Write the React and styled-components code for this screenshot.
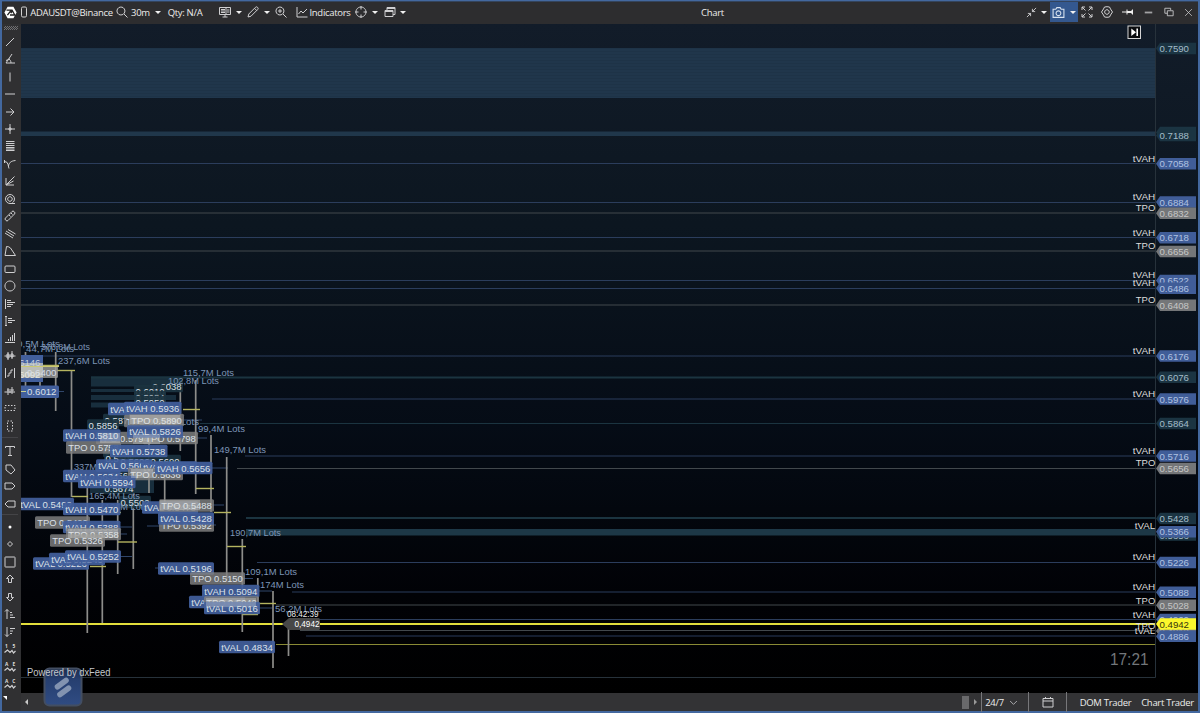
import styled, { createGlobalStyle } from "styled-components"

const GlobalStyle = createGlobalStyle`
  * {
    box-sizing: border-box;
  }

  body {
    margin: 0;
    background: #000;
    overflow: hidden;
  }
`

const Window = styled.div`
  width: 1200px;
  height: 713px;
  display: flex;
  flex-direction: column;
  border: 2px solid #43689f;
  border-top-width: 1px;
  background: #2d2d2f;
  color: #ececec;
  font-family: "Open Sans", "Noto Sans", sans-serif;
  font-size: 9.5px;
  letter-spacing: -0.3px;
`

const Header = styled.header`
  display: flex;
  height: 23px;
  flex: none;
  border-top: 1px solid #34445c;
`

const HeaderGroup = styled.div`
  display: flex;
  width: ${({ $width }) => $width}px;
`

const Slot = styled.div`
  display: flex;
  align-items: center;
  justify-content: ${({ $align }) => $align || "center"};
  width: ${({ $width }) => $width}px;
  height: 20px;
  flex: none;
  white-space: nowrap;
`

const CameraButton = styled.div`
  display: flex;
  align-items: center;
  justify-content: space-between;
  width: 28px;
  height: 20px;
  padding: 0 2px;
  flex: none;
  background: #34588f;
`

const Title = styled.div`
  display: flex;
  align-items: center;
  flex: 1;
  height: 21px;
`

const Caret = styled.i`
  border: 3px solid transparent;
  border-top: 3.5px solid #f0f0f0;
  border-bottom: 0;
`

const Body = styled.div`
  display: flex;
  flex: 1;
  min-height: 0;
`

const Toolbar = styled.nav`
  width: 19px;
  flex: none;
  display: flex;
  flex-direction: column;
  padding-top: 2px;
  padding-right: 4px;
  background: #303032;
`

const Grip = styled.div`
  height: 4px;
  margin: 0 -1px 3px 2px;
  flex: none;
  background: repeating-conic-gradient(#8a8a8d 0 25%, #303032 0 50%) 0 0 / 2px 2px;
  opacity: 0.7;
`

const Tool = styled.div`
  display: flex;
  align-items: center;
  justify-content: center;
  height: 17.46px;
  flex: none;
`

const Divider = styled.hr`
  width: 16px;
  margin: ${({ $margin }) => $margin};
  border: 0;
  border-top: 1px solid #444447;
`

const Corner = styled.i`
  border-left: 4px solid transparent;
  border-top: 4px solid #fff;
  width: 0;
  margin: 3px 0 0 1px;
`

const Main = styled.main`
  display: flex;
  flex-direction: column;
  flex: 1;
`

const ChartSvg = styled.svg`
  display: block;
  font-family: "Liberation Sans", Arial, sans-serif;
  font-size: 9.9px;
  letter-spacing: 0;
`

const Footer = styled.footer`
  display: flex;
  align-items: center;
  height: 18px;
  flex: none;
  background: #333335;
`

const FooterArrow = styled.div`
  width: 10px;
  display: flex;
  justify-content: center;
`

const LeftArrow = styled.i`
  border: 3px solid transparent;
  border-right: 3px solid #c8c8c8;
  border-left: 0;
`

const RightArrow = styled.i`
  border: 3px solid transparent;
  border-left: 3px solid #999;
  border-right: 0;
`

const ScrollSpace = styled.div`
  width: 931px;
`

const ScrollThumb = styled.div`
  width: 7px;
  height: 13px;
  margin-right: 5px;
  background: #69696b;
`

const FooterItem = styled.div`
  display: flex;
  align-items: center;
  justify-content: center;
  gap: 5px;
  height: 20px;
  width: ${({ $width }) => $width}px;
  padding-right: ${({ $inset }) => $inset || 0}px;
  flex: none;
  white-space: nowrap;
  border-left: ${({ $line }) => ($line ? "1px solid #77777a" : 0)};
`

const Badge = styled.svg`
  position: absolute;
  left: 24px;
  top: 664px;
  font-family: "Liberation Sans", Arial, sans-serif;
  font-size: 10px;
`

const Icon = ({ d, size = 12, color = "#cfcfd1", width = 1, children }) => (
  <svg
    width={size}
    height={size}
    viewBox="0 0 12 12"
    fill="none"
    stroke={color}
    strokeWidth={width}
  >
    {d && <path d={d} />}
    {children}
  </svg>
)

// svg text squeezed or stretched to a given width
const Label = ({ x, y, width, fill, children, ...rest }) => (
  <text x={x} y={y} textLength={width} lengthAdjust="spacingAndGlyphs" fill={fill} {...rest}>
    {children}
  </text>
)

const mainTools = [
  "M2 10 10 2",
  "M8 1 2 10H11M4.5 6C6 6.5 7 8 7 10M2 7.5 6 6",
  "M6 1.5V10.5",
  "M1 6H11",
  "M2 6H10M6.5 2.5 10 6 6.5 9.5",
  "M6 1V11M1 6H11M5 5H7V7H5Z",
  "M2 1.5H10.5M2 3.5H10.5M2 5.5H10.5M2 7.5H10.5M2 9H10.5M2 10.5H10.5",
  "M.5 3.5Q3.5 3.5 4 6.5L5 10.5M4.5 8C5 5 6.5 3 11.5 2.5M.5 2V5",
  "M2 10V3M2 10 10.5 1.5M2 10H10M2 10 9.5 6",
  "M11 10.5H6A4.5 4.5 0 1 1 10.5 6A4.5 4.5 0 0 1 8.5 9.7M6 3.7A2.3 2.3 0 1 1 5.9 3.7Z",
  "M1.5 8 8 1.5Q9 .5 10 1.5L10.5 2Q11.5 3 10.5 4L4 10.5Q3 11.5 2 10.5L1.5 10Q.5 9 1.5 8ZM5 5 6.5 6.5M7 3 8.5 4.5",
  "M1 5 9 10M2 3 10 8M4 1.5 11.5 6",
  "M2.5 1.5 1 10.5H11.5L6.5 3Q5 1.5 2.5 1.5Z",
  "M2 3H10Q11 3 11 4V8.5Q11 9.5 10 9.5H2Q1 9.5 1 8.5V4Q1 3 2 3Z",
  "M6 1A5 5 0 1 1 5.9 1Z",
  "M1.5 1V11M3 2.5H7M3 4.5H11M3 6.5H9M3 8.5H7",
  "M2 1V11M4 3.5H8M4 5.5H11M4 7.5H8M1 1.5H3M1 10.5H3",
  "M10.5 1V9M8.5 3V9M6.5 5V9M4.5 7V9M1 10.5H11",
  "M.5 6H11.5M4 2V10M8 1V9M3 4H5V8H3ZM7 4H9V7H7Z",
  "M1.5 1V11M10.5 1V11M3 9H5V6H7V3H9",
  "M.5 7H11M4 3V10M8 2V9M6 4V8M3 5H5M7 5H10",
]

const markTools = [
  "M1.5 3V1.5H10.5V3M6 1.5V10.5M4 10.5H8",
  "M2 2 7 2 11 7 7 11 2 7Z",
  "M1 3H8L11 6 8 9H1Z",
  "M4 3H11V9H4L1 6Z",
]

const shapeTools = [
  null,
  "M6 3.5 8.5 6 6 8.5 3.5 6Z",
  "M1.5 1H10.5Q11 1 11 1.5V10.5Q11 11 10.5 11H1.5Q1 11 1 10.5V1.5Q1 1 1.5 1Z",
  "M6 2 9.5 5.5H7.5V9.5H4.5V5.5H2.5Z",
  "M6 10 2.5 6.5H4.5V2.5H7.5V6.5H9.5Z",
  "M3 11V1.5M1 3.5 3 1.5 5 3.5M6 4.5H8M6 7H9M6 9.5H11",
  "M3 1V10.5M1 8.5 3 10.5 5 8.5M6 2.5H11M6 5H9M6 7.5H8",
]

const waves = ["1 5", "A E", "A C"]

const bars = [
  [25.5, 352, 398],
  [40, 360, 386],
  [55.7, 352, 411],
  [71.5, 370, 497],
  [87.3, 483, 633],
  [102.3, 500, 623],
  [117.7, 500, 574],
  [133.3, 490, 569],
  [149, 440, 493],
  [164.7, 470, 507],
  [180.3, 388, 451],
  [195.7, 380, 494],
  [211, 435, 512],
  [226.7, 457, 580],
  [242.3, 539, 632],
  [257.8, 578, 614],
  [273, 591, 668],
  [288.5, 620, 656],
]

const ticks = [
  [21, 59, 365.5],
  [57, 75, 370.5],
  [72, 88, 496.5],
  [90, 106, 566.5],
  [105, 121, 512.5],
  [118, 137, 542],
  [183, 200, 409.5],
  [196, 214, 488.5],
  [214, 231, 512.5],
  [227, 246, 546.5],
  [242, 258, 614.5],
  [258, 276, 603.5],
]

const lineColors = { blue: "#2b3d5c", gray: "#42484c", teal: "#1b3440" }

// kind, y, start x
const levels = [
  ["blue", 163.5, 21],
  ["blue", 202.5, 21],
  ["gray", 213, 21],
  ["blue", 237.5, 21],
  ["gray", 251, 21],
  ["blue", 280.5, 21],
  ["blue", 288.5, 21],
  ["gray", 305, 21],
  ["blue", 356, 21],
  ["teal", 377.5, 91, 2],
  ["blue", 399, 212],
  ["teal", 423.5, 200],
  ["blue", 456, 245],
  ["gray", 468.5, 237],
  ["teal", 518, 246, 2],
  ["blue", 562.5, 257],
  ["blue", 592, 292],
  ["gray", 605, 276],
  ["blue", 619.5, 290],
  ["gray", 630.5, 300],
  ["blue", 636, 306],
]

const stubs = [
  [21, 64, 391.5],
  [172, 216, 525],
  [155, 162, 568],
  [176, 202, 420],
  [190, 207, 438],
  [210, 228, 468],
  [208, 224, 505],
  [104, 132, 527],
  [106, 127, 534],
  [115, 132, 556.5],
  [240, 253, 578.5],
  [257, 272, 591],
  [257, 272, 608],
  [147, 162, 526],
]

const volumes = [
  ["0,5M Lots", 17, 343, 43],
  ["44,7M Lots", 26, 348, 48],
  ["373,8M Lots", 41, 346, 49],
  ["237,6M Lots", 58, 360, 52],
  ["115,7M Lots", 183, 372, 51],
  ["102,8M Lots", 168, 380, 51],
  ["88,1M Lots", 151, 421, 48],
  ["99,4M Lots", 198, 428, 47],
  ["149,7M Lots", 214, 449, 52],
  ["337M Lots", 74, 466, 43],
  ["165,4M Lots", 89, 495, 51],
  ["126M Lots", 105, 506, 43],
  ["190,7M Lots", 230, 532, 51],
  ["109,1M Lots", 245, 571, 52],
  ["174M Lots", 260, 584, 44],
  ["56,2M Lots", 275, 608, 47],
]

// text, x, y
const volumeLevels = [
  ["0.6038", 151, 386],
  ["0.6010", 134, 391],
  ["0.5984", 134, 397],
  ["0.5950", 134, 402],
  ["0.5879", 103, 420],
  ["0.5856", 87, 425.5],
  ["0.5738", 103, 451],
  ["0.5696", 104, 458],
  ["0.5606", 119, 461],
  ["0.5690", 149, 461],
  ["0.5634", 108, 475],
  ["0.5674", 103, 488],
  ["0.5502", 119, 502],
]

// kind, text, x, y
const tags = [
  ["blue", "tVAH 0.5932", 108, 409],
  ["gray", "TPO 0.5880", 124, 421],
  ["gray", "TPO 0.5890", 129, 420],
  ["blue", "tVAH 0.5936", 124, 408],
  ["gray", "TPO 0.5794", 96, 438],
  ["gray", "TPO 0.5798", 143, 438],
  ["blue", "tVAL 0.5826", 127, 431.5],
  ["blue", "tVAH 0.5810", 63, 435.5],
  ["gray", "TPO 0.5758", 66, 447.5],
  ["blue", "tVAH 0.5738", 110, 451],
  ["blue", "tVAH 0.5634", 63, 476],
  ["blue", "tVAL 0.5668", 96, 465.5],
  ["blue", "tVAL 0.5658", 141, 467.5],
  ["gray", "TPO 0.5636", 128, 474],
  ["blue", "tVAH 0.5656", 155, 468],
  ["blue", "tVAH 0.5594", 78, 482],
  ["blue", "tVAL 0.5492", 18, 504],
  ["gray", "TPO 0.5420", 35, 522.5],
  ["blue", "tVAH 0.5470", 63, 509],
  ["blue", "tVAH 0.5388", 63, 527],
  ["gray", "TPO 0.5358", 66, 534],
  ["gray", "TPO 0.5326", 50, 540.5],
  ["blue", "tVAL 0.5226", 33, 563.5],
  ["blue", "tVAL 0.5240", 49, 559],
  ["blue", "tVAL 0.5252", 65, 556.5],
  ["blue", "tVAL 0.5478", 142, 507.5],
  ["gray", "TPO 0.5488", 159, 505.5],
  ["gray", "TPO 0.5392", 159, 525.5],
  ["blue", "tVAL 0.5428", 158, 518.5],
  ["blue", "tVAL 0.5196", 158, 568.5],
  ["gray", "TPO 0.5150", 190, 578.5],
  ["blue", "tVAH 0.5094", 202, 591],
  ["blue", "tVAL 0.5046", 189, 602],
  ["gray", "TPO 0.5042", 204, 602.5],
  ["blue", "tVAL 0.5016", 204, 608],
  ["blue", "tVAL 0.4834", 219, 647],
]

const tagColors = { blue: "#425f9c", gray: "#818181", teal: "#1b3340" }

const tagWidth = (text) => {
  if (text.startsWith("tVAH")) return 57.5
  if (text.startsWith("tVAL")) return 56
  return text.startsWith("TPO") ? 55 : 32
}

const Tag = ({ kind, text, x, y }) => {
  const width = tagWidth(text)
  const pad = kind === "teal" ? 1.5 : 2.2
  return (
    <g>
      <rect
        x={x}
        y={y - 6.3}
        width={width}
        height={12.6}
        rx={1.5}
        fill={tagColors[kind]}
        fillOpacity={kind === "gray" ? 0.82 : 0.93}
      />
      <Label x={x + pad} y={y + 3.6} width={width - pad * 2} fill="#dbe0e8">
        {text}
      </Label>
    </g>
  )
}

// kind, price, y, name, name y
const prices = [
  ["teal", "0.7590", 48.5],
  ["teal", "0.7206", 132.5],
  ["teal", "0.7188", 135.5],
  ["blue", "0.7058", 163.7, "tVAH", 158],
  ["blue", "0.6884", 202, "tVAH", 196],
  ["gray", "0.6832", 213.3, "TPO", 207.5],
  ["blue", "0.6718", 237.8, "tVAH", 232],
  ["gray", "0.6656", 251.5, "TPO", 245.5],
  ["blue", "0.6522", 280.5, "tVAH", 274.5],
  ["blue", "0.6486", 288.3, "tVAH", 282.7],
  ["gray", "0.6408", 305.3, "TPO", 299.5],
  ["blue", "0.6176", 356, "tVAH", 350],
  ["teal", "0.6076", 377.3],
  ["blue", "0.5976", 399, "tVAH", 393.3],
  ["teal", "0.5864", 423.5],
  ["blue", "0.5716", 456, "tVAH", 450],
  ["gray", "0.5656", 468.5, "TPO", 462.7],
  ["teal", "0.5428", 518.5],
  ["teal", "0.5356", 535],
  ["blue", "0.5366", 531.7, "tVAL", 525.8],
  ["blue", "0.5226", 562.5, "tVAH", 556.7],
  ["blue", "0.5088", 592.3, "tVAH", 586.7],
  ["gray", "0.5028", 605.3, "TPO", 600],
  ["blue", "0.4960", 619.5, "tVAH", 614],
  ["gray", "0.4912", 631, "TPO", 625],
  ["blue", "0.4886", 636.3, "tVAL", 630.7],
  ["yellow", "0.4942", 624],
]

const priceFill = { blue: "#405d98", gray: "#747678", teal: "#1b3442", yellow: "#fbf72c" }
const priceText = { blue: "#b0c2e2", gray: "#c6c6c6", teal: "#a3bcc9", yellow: "#34330c" }
const nameWidth = { tVAH: 22.5, tVAL: 20.5, TPO: 19.5 }

const PriceTag = ({ kind, price, y, name, nameY }) => (
  <g>
    <path d={`M1156 ${y}L1160 ${y - 5.7}H1196V${y + 5.7}H1160Z`} fill={priceFill[kind]} />
    <Label x={1159.5} y={y + 3.6} width={29.5} fill={priceText[kind]}>
      {price}
    </Label>
    {name && (
      <Label x={1155.3 - nameWidth[name]} y={nameY + 3.5} width={nameWidth[name]} fill="#dddddd">
        {name}
      </Label>
    )}
  </g>
)

const Chart = () => (
  <ChartSvg width="1177" height="669" viewBox="21 24 1177 669">
    <defs>
      <linearGradient id="sky" x1="0" y1="0" x2="0" y2="1">
        <stop offset="0" stopColor="#121c29" />
        <stop offset="0.3" stopColor="#0c1620" />
        <stop offset="0.6" stopColor="#050c16" />
        <stop offset="0.85" stopColor="#010206" />
        <stop offset="1" stopColor="#000" />
      </linearGradient>
      <pattern id="bandRows" width="4" height="3" patternUnits="userSpaceOnUse">
        <rect width="4" height="3" fill="#20364b" />
        <rect width="4" height="1" fill="#1e3347" />
      </pattern>
    </defs>
    <rect x="21" y="24" width="1177" height="669" fill="url(#sky)" />
    <rect x="21" y="48" width="1134" height="50" fill="url(#bandRows)" />
    <rect x="21" y="131.5" width="1134" height="4.5" fill="#20374b" />

    <g fill="#182e3d">
      <rect x="91" y="376.5" width="90" height="10" />
      <rect x="91" y="389" width="85" height="3" />
      <rect x="91" y="395" width="85" height="5" />
      <rect x="91" y="402.5" width="80" height="5" />
      <rect x="246" y="529" width="909" height="6.5" fill="#1d3847" />
      <rect x="90" y="476" width="64" height="17" />
    </g>

    {levels.map(([kind, y, x, width]) => (
      <path key={y} d={`M${x} ${y}H1155`} stroke={lineColors[kind]} strokeWidth={width || 1} />
    ))}
    <path d="M1155.5 24V677.5H21" fill="none" stroke="#27323b" />

    <path d="M21 624H1155" stroke="#e2de3c" strokeWidth="1.8" />
    <path d="M276 644.5H1155" stroke="#8a8b35" />

    {stubs.map(([x1, x2, y]) => (
      <path key={`${x1}-${y}`} d={`M${x1} ${y}H${x2}`} stroke="#30466a" />
    ))}
    {bars.map(([x, top, bottom]) => (
      <path key={x} d={`M${x} ${top}V${bottom}`} stroke="#8d8d8a" strokeWidth="1.7" />
    ))}
    {volumeLevels.map(([text, x, y]) => (
      <Tag key={text} kind="teal" text={text} x={x} y={y} />
    ))}
    {volumes.map(([text, x, y, width]) => (
      <Label key={text} x={x} y={y + 3.6} width={width} fill="#7d95b6">
        {text}
      </Label>
    ))}
    {ticks.map(([x1, x2, y]) => (
      <path key={y} d={`M${x1} ${y}H${x2}`} stroke="#b5b45f" strokeWidth="1.4" />
    ))}

    <rect x="15" y="355" width="28" height="27" fill="#425f9c" />
    <Label x={11} y={366} width={29.5} fill="#c3cde0">0.6146</Label>
    <rect x="15" y="366" width="43" height="12" rx="1.5" fill="#9b9b98" fillOpacity=".8" />
    <rect x="21" y="363" width="22" height="14" fill="#d5d5c8" fillOpacity=".65" />
    <Label x={11} y={377.5} width={29.5} fill="#e8e8e0">0.6092</Label>
    <Label x={27} y={376} width={29.5} fill="#d4dae4">0.6400</Label>
    <path d="M21 366.5H59" stroke="#cac873" />
    <rect x="15" y="385.5" width="44" height="12.5" rx="1.5" fill="#425f9c" />
    <Label x={27} y={395.3} width={29.5} fill="#dbe0e8">0.6012</Label>
    <path d="M21 391.5H26" stroke="#c9cf91" />

    {tags.map(([kind, text, x, y]) => (
      <Tag key={`${text}-${x}`} kind={kind} text={text} x={x} y={y} />
    ))}
    <g fill="#e4e4de" fillOpacity=".32">
      <rect x="100" y="433" width="20" height="10" />
      <rect x="130" y="415" width="50" height="9" />
      <rect x="133" y="434" width="27" height="10" />
      <rect x="68" y="529" width="50" height="9" />
      <rect x="131" y="469" width="22" height="9" />
      <rect x="160" y="500" width="40" height="10" />
      <rect x="206" y="598" width="50" height="9" />
    </g>

    <Label x={287} y={616.7} width={31.5} fontSize="9.4" fill="#ececec">08:42:39</Label>
    <path d="M282 624L289 618H318.5Q320 618 320 619.5V628.5Q320 630 318.5 630H289Z" fill="#474747" />
    <Label x={294.5} y={627.3} width={25} fontSize="9.2" fill="#fff">0,4942</Label>

    {prices.map(([kind, price, y, name, nameY]) => (
      <PriceTag key={price} kind={kind} price={price} y={y} name={name} nameY={nameY} />
    ))}

    <Label x={1110} y={665} width={38.5} fontSize="16" fill="#73777b">17:21</Label>

    <rect x="1128" y="26" width="12.5" height="12.5" fill="#090b0e" stroke="#d4d4d4" />
    <path d="M1131.3 28.5V36L1136 32.2Z" fill="#fff" />
    <path d="M1137.2 28.5V36" stroke="#fff" strokeWidth="1.6" />
  </ChartSvg>
)

const App = () => (
  <>
    <GlobalStyle />
    <Window>
      <Header>
        <HeaderGroup $width={699}>
          <Slot $width={17}>
            <svg width="13" height="13" viewBox="0 0 13 13">
              <path d="M3.6.8H9.4L12.6 6.5 9.4 12.2H3.6L.4 6.5Z" fill="#fff" />
              <path d="M2.5 4.2H7.3L3.4 9.2M6.8 7.2 8.4 4.8 10.8 9H6" fill="none" stroke="#222" strokeWidth="1.3" />
            </svg>
          </Slot>
          <Slot $width={9}>
            <svg width="6" height="12" viewBox="0 0 6 12">
              <rect x=".5" y="1" width="5" height="10" rx="1.3" fill="none" stroke="#d2d2d2" />
            </svg>
          </Slot>
          <Slot $width={87}>ADAUSDT@Binance</Slot>
          <Slot $width={13}>
            <Icon d="M5 1A4 4 0 1 1 4.9 1ZM8 8 11.5 11.5" />
          </Slot>
          <Slot $width={25}>30m</Slot>
          <Slot $width={9}>
            <Caret />
          </Slot>
          <Slot $width={46}>Qty: N/A</Slot>
          <Slot $width={23} $align="flex-end">
            <Icon d="M.5 1.5H11.5V8.5H.5ZM3.5 11H8.5M6 8.5V11M7 1.5V8.5M2 3.5H6M2 5H6M2 6.5H6M8 4H10.5M8 6H10.5" />
          </Slot>
          <Slot $width={15}>
            <Caret />
          </Slot>
          <Slot $width={14}>
            <Icon d="M1 11 1.8 8 8.5 1.3Q9.5.3 10.6 1.4 11.7 2.5 10.7 3.5L4 10.2ZM7.5 2.3 9.7 4.5" />
          </Slot>
          <Slot $width={13}>
            <Caret />
          </Slot>
          <Slot $width={16}>
            <Icon d="M5 1A4 4 0 1 1 4.9 1ZM8 8 11.5 11.5M5 3V7M3 5H7" />
          </Slot>
          <Slot $width={19} $align="flex-end">
            <Icon d="M1 1V11H11.5M2.5 8 5 5 7 7 11 3" />
          </Slot>
          <Slot $width={44}>Indicators</Slot>
          <Slot $width={18}>
            <Icon d="M6 1A5 5 0 1 1 5.9 1ZM6 0V3.5M6 8.5V12M0 6H3.5M8.5 6H12" />
          </Slot>
          <Slot $width={10}>
            <Caret />
          </Slot>
          <Slot $width={19}>
            <Icon d="M1 4.5H9V10.5H1ZM1 5.5H9M3 4V1.5H11V8.5H9M3 2.5H11" />
          </Slot>
          <Slot $width={8}>
            <Caret />
          </Slot>
        </HeaderGroup>
        <Title>Chart</Title>
        <HeaderGroup $width={174}>
          <Slot $width={14}>
            <Icon size={11} d="M1 11 5 7M2 7H5V10M11 1 7 5M7 2V5H10" />
          </Slot>
          <Slot $width={12}>
            <Caret />
          </Slot>
          <CameraButton>
            <Icon size={13} color="#d8e2f0" d="M1 3H3.5L4.5 1.5H7.5L8.5 3H11V10.5H1ZM6 4.5A2.2 2.2 0 1 1 5.9 4.5Z" />
            <Caret />
          </CameraButton>
          <Slot $width={18}>
            <Icon d="M1 4V1H4M1 1 4.5 4.5M8 1H11V4M11 1 7.5 4.5M11 8V11H8M11 11 7.5 7.5M4 11H1V8M1 11 4.5 7.5" />
          </Slot>
          <Slot $width={21}>
            <Icon d="M3.5 1 6 .7 8.5 1 9.5 3 11.5 6 9.5 9 8.5 11 6 11.3 3.5 11 2.5 9 .5 6 2.5 3ZM6 3.7A2.3 2.3 0 1 1 5.9 3.7Z" />
          </Slot>
          <Slot $width={21}>
            <Icon color="#eee" d="M0 6H5M5 3.5V8.5M5 5.5H10M5 6.5H10M10.5 3.5V8.5M9.5 4.5V7.5" />
          </Slot>
          <Slot $width={20}>
            <Icon size={9} width={2.4} color="#a2a2a4" d="M1 6H11" />
          </Slot>
          <Slot $width={21}>
            <Icon size={10} d="M1 1.5H8V4M1 1.5V7.5H4M4 4.5H11V10.5H4Z" />
          </Slot>
          <Slot $width={19}>
            <Icon size={9} d="M1.5 1.5 10.5 10.5M10.5 1.5 1.5 10.5" />
          </Slot>
        </HeaderGroup>
      </Header>
      <Body>
        <Toolbar>
          <Grip />
          {mainTools.map((d) => (
            <Tool key={d}>
              <Icon size={12} d={d} />
            </Tool>
          ))}
          <Tool>
            <Icon size={12}>
              <rect x="1" y="3.5" width="10" height="5" strokeDasharray="1.5 1.5" />
            </Icon>
          </Tool>
          <Tool>
            <Icon size={12}>
              <rect x="3.5" y="1" width="5" height="10" strokeDasharray="1.5 1.5" />
            </Icon>
          </Tool>
          <Divider $margin="3px 0 4px 0" />
          {markTools.map((d) => (
            <Tool key={d}>
              <Icon size={12} d={d} />
            </Tool>
          ))}
          <Divider $margin="2px 0 3px 0" />
          {shapeTools.map((d) => (
            <Tool key={d}>
              <Icon size={12} d={d}>
                {!d && <circle cx="6" cy="6" r="1.5" fill="#fff" stroke="none" />}
              </Icon>
            </Tool>
          ))}
          {waves.map((label) => (
            <Tool key={label}>
              <Icon size={12} width={1.2}>
                <text x="1" y="4.5" fontSize="4.8" fontWeight="700" textLength="10" fill="#ddd" stroke="none">
                  {label}
                </text>
                <path d="M.5 9.5 3.5 7 6 9.5 8 7.5 9.5 10 11.5 8" />
              </Icon>
            </Tool>
          ))}
          <Corner />
        </Toolbar>
        <Main>
          <Chart />
          <Footer>
            <FooterArrow>
              <LeftArrow />
            </FooterArrow>
            <ScrollSpace />
            <ScrollThumb />
            <RightArrow />
            <FooterItem $width={4} />
            <FooterItem $width={47} $inset={7} $line>
              <span>24/7</span>
              <Icon size={9} d="M1.5 4 6 8.5 10.5 4" />
            </FooterItem>
            <FooterItem $width={38} $line>
              <Icon size={12} d="M1 2.5H11V11H1ZM1 5H11M3.5 1V3M8.5 1V3" />
            </FooterItem>
            <FooterItem $width={78} $line>DOM Trader</FooterItem>
            <FooterItem $width={47}>Chart Trader</FooterItem>
          </Footer>
        </Main>
      </Body>
    </Window>
    <Badge width="92" height="44" viewBox="24 664 92 44">
      <defs>
        <linearGradient id="badge" x1="0" y1="0" x2="0" y2="1">
          <stop offset="0" stopColor="#1c2c4c" />
          <stop offset="0.3" stopColor="#263f70" />
          <stop offset="1" stopColor="#304c83" />
        </linearGradient>
      </defs>
      <rect x="44.5" y="668.5" width="37" height="37" rx="5" fill="url(#badge)" stroke="#434e62" strokeWidth="2" />
      <path
        d="M57.5 686.8 66 680.5M60 694.5 68.5 688.2"
        stroke="#8293b0"
        strokeWidth="5.6"
        strokeLinecap="round"
      />
      <Label x={27} y={676} width={83.5} fill="#c3c7cc">Powered by dxFeed</Label>
    </Badge>
  </>
)

export default App
